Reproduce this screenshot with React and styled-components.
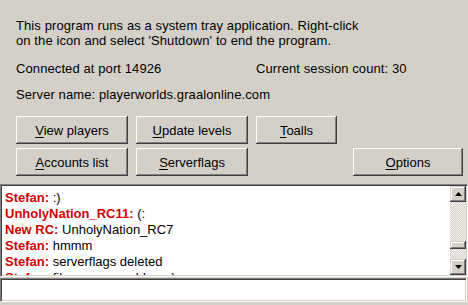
import React from 'react';
import styled, { createGlobalStyle } from 'styled-components';

const GlobalStyle = createGlobalStyle`
    html, body {
        margin: 0;
        padding: 0;
        background: #d4d0c8;
        overflow: hidden;
    }
    * {
        box-sizing: border-box;
    }
`

const Window = styled.div`
    width: 468px;
    height: 305px;
    background-color: #d4d0c8;
    font-family: "Liberation Sans", Arial, sans-serif;
    font-size: 13px;
    color: #000;
    display: flex;
    flex-direction: column;
`

const Header = styled.div`
    padding: 18px 6px 0 16px;
    line-height: 15px;
    letter-spacing: 0.1px;
`

const InfoText = styled.div`
    line-height: 15px;
`

const StatusRow = styled.div`
    display: grid;
    grid-template-columns: 240px 1fr;
    margin-top: 13px;
    line-height: 15px;
`

const ServerLine = styled.div`
    margin-top: 11px;
    line-height: 15px;
`

const ButtonGrid = styled.div`
    display: grid;
    grid-template-columns: 112px 112px 81px 1fr 110px;
    grid-template-rows: 28px 28px;
    column-gap: 8px;
    row-gap: 4px;
    padding: 0 6px 0 16px;
    margin-top: 14px;
`

const Button = styled.button`
    grid-column: ${props => props.col};
    grid-row: ${props => props.row};
    font-family: inherit;
    font-size: 13px;
    color: #000;
    background-color: #d4d0c8;
    border: none;
    padding: 0;
    box-shadow:
        inset -1px -1px #404040,
        inset 1px 1px #ffffff,
        inset -2px -2px #808080,
        inset 2px 2px #d4d0c8;

    u {
        text-decoration: underline;
        text-underline-offset: 2px;
    }
`

const ChatLog = styled.div`
    margin-top: 8px;
    height: 93px;
    display: flex;
    background: #fff;
    border-top: 1px solid #808080;
    border-left: 1px solid #808080;
    border-bottom: 1px solid #fff;
    border-right: 1px solid #fff;
    box-shadow: inset 1px 1px #404040, inset -1px -1px #d4d0c8;
    padding: 1px;
`

const Lines = styled.div`
    flex: 1;
    overflow: hidden;
    padding: 4px 0 0 3px;
    line-height: 16px;
    white-space: nowrap;
`

const Line = styled.div`
    b {
        color: #d40000;
        font-weight: bold;
    }
`

const ScrollBar = styled.div`
    width: 16px;
    display: flex;
    flex-direction: column;
    background-color: #f4f3f0;
    background-image:
        linear-gradient(45deg, #d4d0c8 25%, transparent 25%, transparent 75%, #d4d0c8 75%),
        linear-gradient(45deg, #d4d0c8 25%, transparent 25%, transparent 75%, #d4d0c8 75%);
    background-size: 2px 2px;
    background-position: 0 0, 1px 1px;
`

const ScrollButton = styled.div`
    width: 16px;
    height: ${props => props.h}px;
    background: #d4d0c8;
    display: flex;
    align-items: center;
    justify-content: center;
    box-shadow:
        inset -1px -1px #404040,
        inset 1px 1px #d4d0c8,
        inset -2px -2px #808080,
        inset 2px 2px #ffffff;
`

const Track = styled.div`
    flex: ${props => props.grow};
`

const InputBox = styled.input`
    margin-top: 1px;
    width: 467px;
    height: 24px;
    border-top: 1px solid #808080;
    border-left: 1px solid #808080;
    border-bottom: 1px solid #fff;
    border-right: 1px solid #fff;
    box-shadow: inset 1px 1px #404040, inset -1px -1px #d4d0c8;
    background: #fff;
    font-family: inherit;
    font-size: 13px;
    outline: none;
    padding: 0 4px;
`

const Arrow = ({ up }) => (
    <svg width="7" height="4" viewBox="0 0 7 4">
        <path d={up ? "M3.5 0 L7 4 L0 4 Z" : "M0 0 L7 0 L3.5 4 Z"} fill="#000" />
    </svg>
)

const messages = [
    { who: 'Stefan:', text: ' :)' },
    { who: 'UnholyNation_RC11:', text: ' (:' },
    { who: 'New RC:', text: ' UnholyNation_RC7' },
    { who: 'Stefan:', text: ' hmmm' },
    { who: 'Stefan:', text: ' serverflags deleted' },
    { who: 'Stefan:', text: ' file access problem :)' },
]

export default function App() {
    return (
        <Window>
            <GlobalStyle />
            <Header>
                <InfoText>This program runs as a system tray application. Right-click</InfoText>
                <InfoText>on the icon and select 'Shutdown' to end the program.</InfoText>
                <StatusRow>
                    <span>Connected at port 14926</span>
                    <span>Current session count: 30</span>
                </StatusRow>
                <ServerLine>Server name: playerworlds.graalonline.com</ServerLine>
            </Header>

            <ButtonGrid>
                <Button col={1} row={1}><u>V</u>iew players</Button>
                <Button col={2} row={1}><u>U</u>pdate levels</Button>
                <Button col={3} row={1}><u>T</u>oalls</Button>
                <Button col={1} row={2}><u>A</u>ccounts list</Button>
                <Button col={2} row={2}><u>S</u>erverflags</Button>
                <Button col={5} row={2}><u>O</u>ptions</Button>
            </ButtonGrid>

            <ChatLog>
                <Lines>
                    {messages.map((m, i) => (
                        <Line key={i}><b>{m.who}</b>{m.text}</Line>
                    ))}
                </Lines>
                <ScrollBar>
                    <ScrollButton h={16}><Arrow up /></ScrollButton>
                    <Track grow={40} />
                    <ScrollButton h={8} />
                    <Track grow={10} />
                    <ScrollButton h={16}><Arrow /></ScrollButton>
                </ScrollBar>
            </ChatLog>

            <InputBox type="text" />
        </Window>
    )
}
